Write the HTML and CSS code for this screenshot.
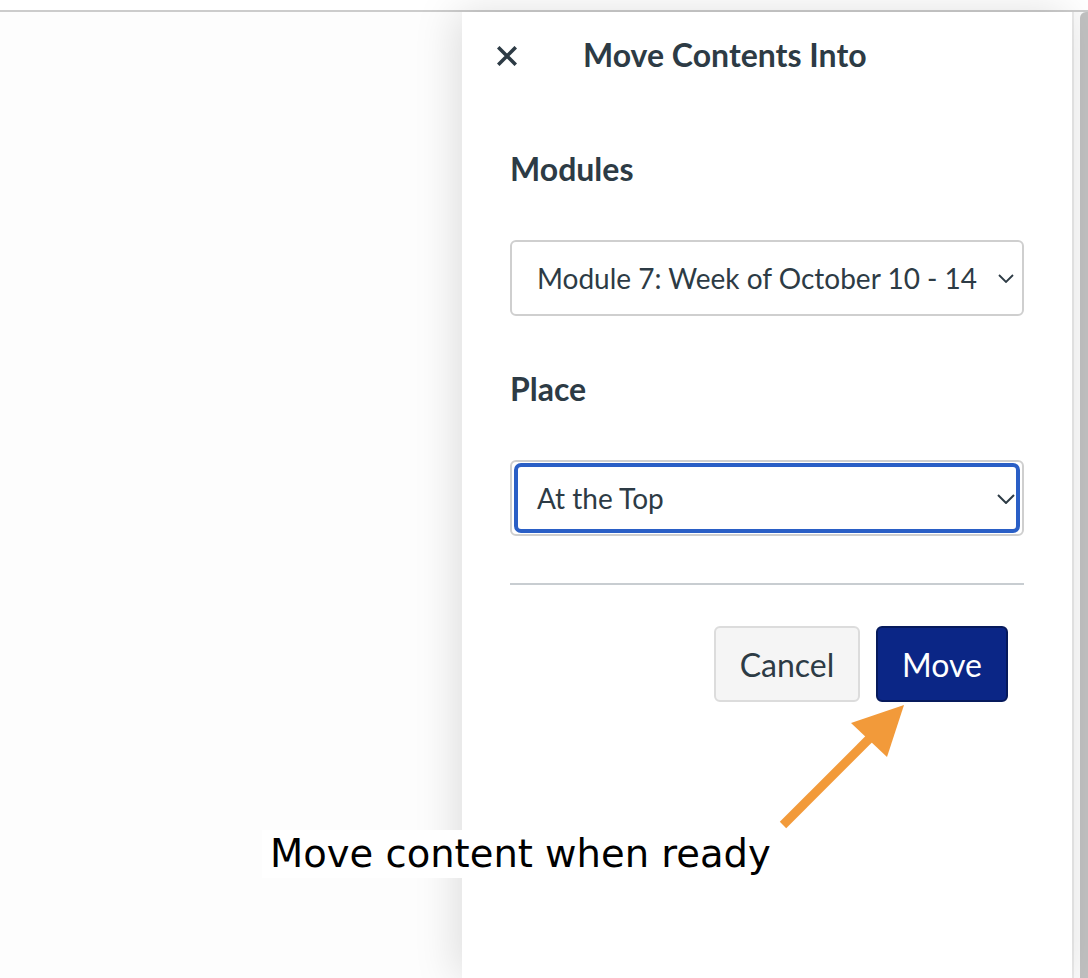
FILE: index.html
```html
<!DOCTYPE html>
<html lang="en">
<head>
<meta charset="utf-8">
<title>Move Contents Into</title>
<link rel="stylesheet" href="styles.css">
</head>
<body>
<div class="topbar"></div>
<div class="main">
  <div class="backdrop"></div>
  <aside class="panel">
    <header class="panel-header">
      <button class="close" aria-label="Close">
        <svg width="20" height="20" viewBox="0 0 20 20"><path d="M2.5 2.5 L17.5 17.5 M17.5 2.5 L2.5 17.5" stroke="#2d3b45" stroke-width="3.6" stroke-linecap="square" fill="none"/></svg>
      </button>
      <h1 class="title">Move Contents Into</h1>
    </header>
    <div class="panel-body">
      <label class="field-label">Modules</label>
      <div class="select">
        <span class="select-text">Module 7: Week of October 10 - 14</span>
        <svg class="chev" width="16" height="9" viewBox="0 0 16 9"><path d="M1 1 L8 8 L15 1" stroke="#2d3b45" stroke-width="1.8" fill="none"/></svg>
      </div>
      <label class="field-label place">Place</label>
      <div class="select focused">
        <div class="focus-ring">
          <span class="select-text">At the Top</span>
          <svg class="chev chev2" width="18" height="10" viewBox="0 0 18 10"><path d="M1 1 L9 9 L17 1" stroke="#2d3b45" stroke-width="2" fill="none"/></svg>
        </div>
      </div>
      <hr class="divider">
      <div class="actions">
        <button class="btn btn-cancel">Cancel</button>
        <button class="btn btn-move">Move</button>
      </div>
    </div>
  </aside>
  <div class="gutter">
    <div class="gutter-line"></div>
    <div class="thumb"></div>
  </div>
</div>
<svg class="arrow" width="1088" height="978" viewBox="0 0 1088 978">
  <line x1="783" y1="825" x2="875" y2="733" stroke="#f29a3a" stroke-width="9"/>
  <polygon points="904,705 851,723 887,757" fill="#f29a3a"/>
</svg>
<div class="note">Move content when ready</div>
</body>
</html>
```
FILE: styles.css
```css
* { box-sizing: border-box; }
html, body { margin: 0; padding: 0; }
body {
  width: 1088px;
  height: 978px;
  overflow: hidden;
  background: #ffffff;
  font-family: "Lato", "Noto Sans", sans-serif;
  color: #2d3b45;
  position: relative;
}
.topbar {
  height: 12px;
  border-bottom: 2px solid #cccccc;
  background: #ffffff;
}
.main {
  display: flex;
  height: 966px;
}
.backdrop {
  flex: 1;
  background: #fdfdfd;
}
.panel {
  width: 610px;
  background: #ffffff;
  box-shadow: -6px 0 40px rgba(0, 0, 0, 0.13);
  position: relative;
  z-index: 1;
}
.panel-header {
  height: 86px;
  display: flex;
  align-items: center;
  padding-left: 35px;
}
.close {
  width: 20px;
  height: 20px;
  padding: 0;
  margin: 2px 0 0 0;
  border: 0;
  background: none;
  display: flex;
}
.title {
  margin: 0 0 0 66px;
  font-size: 32px;
  font-weight: 700;
  line-height: 1;
}
.panel-body {
  padding: 0 48px;
  display: flex;
  flex-direction: column;
}
.field-label {
  font-size: 32px;
  font-weight: 700;
  line-height: 32px;
  margin-top: 55px;
  margin-bottom: 55px;
}
.field-label.place {
  margin-top: 57px;
}
.select {
  height: 76px;
  border: 2px solid #cfcfcf;
  border-radius: 6px;
  display: flex;
  align-items: center;
  padding: 0 8px 0 25px;
  background: #fff;
}
.select-text {
  font-size: 28px;
  flex: 1;
}
.chev { margin-top: 1px; }
.select.focused {
  padding: 1px 2px;
}
.focus-ring {
  flex: 1;
  height: 70px;
  border: 4px solid #2a5fc6;
  border-radius: 7px;
  display: flex;
  align-items: center;
  padding: 0 0 0 19px;
}
.chev2 { margin-right: 1px; }
.divider {
  margin: 47px 0 0 0;
  border: 0;
  height: 2px;
  background: #c8cdd1;
}
.actions {
  display: flex;
  justify-content: flex-end;
  gap: 16px;
  padding-right: 16px;
  margin-top: 41px;
}
.btn {
  height: 76px;
  border-radius: 6px;
  font-family: "Lato", "Noto Sans", sans-serif;
  font-size: 32px;
  padding: 0;
}
.btn-cancel {
  width: 146px;
  background: #f5f5f5;
  border: 2px solid #dcdcdc;
  color: #2d3b45;
}
.btn-move {
  width: 132px;
  background: #0b2686;
  border: 2px solid #061a5c;
  color: #ffffff;
}
.gutter {
  width: 16px;
  display: flex;
  background: #fbfbfb;
}
.gutter-line {
  width: 2px;
  background: #ebebeb;
}
.thumb {
  margin-left: 6px;
  width: 8px;
  background: #c1c1c1;
  border-top-left-radius: 6px;
}
.arrow {
  position: absolute;
  left: 0;
  top: 0;
  z-index: 5;
  pointer-events: none;
}
.note {
  position: absolute;
  left: 262px;
  top: 830px;
  height: 48px;
  padding: 0 8px;
  background: #ffffff;
  font-family: "DejaVu Sans", "Verdana", sans-serif;
  font-size: 38.5px;
  line-height: 48px;
  color: #000000;
  z-index: 6;
}
```
